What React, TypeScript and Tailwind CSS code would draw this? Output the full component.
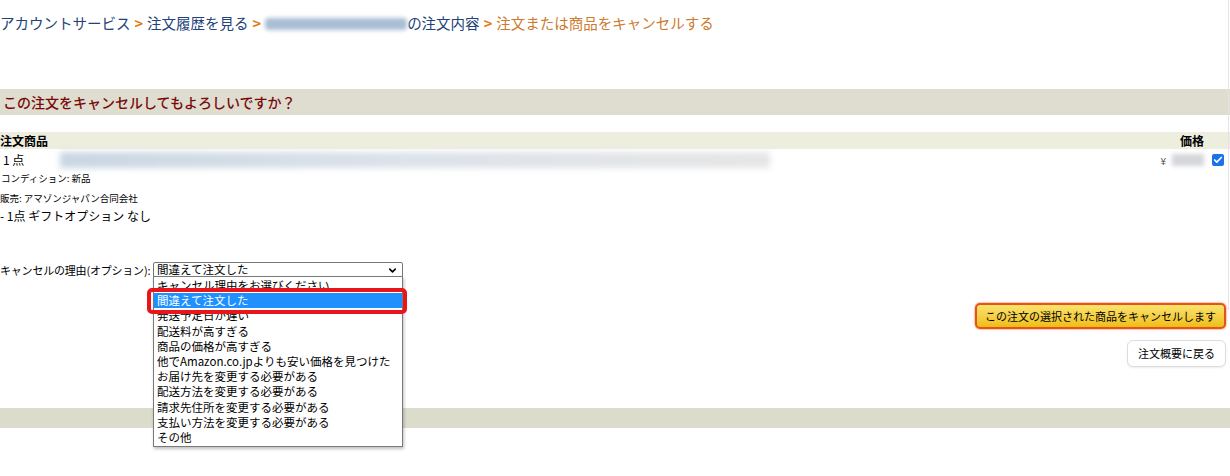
import React from "react";
import { ChevronDown, Check } from "lucide-react";

const reasons = [
  "キャンセル理由をお選びください",
  "間違えて注文した",
  "発送予定日が遅い",
  "配送料が高すぎる",
  "商品の価格が高すぎる",
  "他でAmazon.co.jpよりも安い価格を見つけた",
  "お届け先を変更する必要がある",
  "配送方法を変更する必要がある",
  "請求先住所を変更する必要がある",
  "支払い方法を変更する必要がある",
  "その他",
];

const font = "font-['Noto_Sans_CJK_JP','Liberation_Sans',sans-serif]";

function Crumb({ children }: { children: React.ReactNode }) {
  return <span className="text-[#23427a]">{children}</span>;
}

function Sep() {
  return <span className="text-[#e47911] font-bold mx-[4px]">&gt;</span>;
}

export default function App() {
  return (
    <div className={`relative w-[1230px] h-[476px] bg-white overflow-hidden text-black ${font}`}>
      {/* breadcrumb */}
      <div className="h-[89px] pt-[12px] text-[14.5px] leading-[22px] flex items-start">
        <Crumb>アカウントサービス</Crumb>
        <Sep />
        <Crumb>注文履歴を見る</Crumb>
        <Sep />
        <span className="inline-block w-[142px] h-[12px] mt-[6px] bg-[#a9bdd3] blur-[2px] rounded-sm" />
        <Crumb>の注文内容</Crumb>
        <Sep />
        <span className="text-[#cc7a2e]">注文または商品をキャンセルする</span>
      </div>

      {/* question band */}
      <div className="h-[26px] bg-[#deddd0] flex items-center pl-[3px] text-[#7a0a0a] text-[14px] font-medium">
        この注文をキャンセルしてもよろしいですか？
      </div>

      <div className="h-[17px]" />

      {/* table header */}
      <div className="h-[17px] bg-[#eeeedf] flex items-center justify-between text-[12px] font-bold pr-[26px]">
        <span>注文商品</span>
        <span>価格</span>
      </div>

      {/* item row */}
      <div className="h-[20px] flex items-center text-[12px] mt-[1px]">
        <span className="w-[60px] pl-[3px]">1 点</span>
        <div className="w-[710px] h-[16px] bg-gradient-to-r from-[#c9d6e2] via-[#dde3ea] to-[#e6e6e6] blur-[3px]" />
        <div className="flex-1" />
        <span className="text-[10px] text-[#555] mr-[6px]">¥</span>
        <div className="w-[32px] h-[12px] bg-[#d4d6da] blur-[2px] mr-[8px]" />
        <div className="w-[12px] h-[12px] rounded-[2px] bg-[#1a73e8] flex items-center justify-center mr-[6px]">
          <Check size={10} strokeWidth={4} className="text-white" />
        </div>
      </div>

      <div className="text-[9.5px] leading-[20px] mt-[-2px] pl-[1px]">コンディション: 新品</div>
      <div className="text-[9.5px] leading-[20px]">販売: アマゾンジャパン合同会社</div>
      <div className="text-[12px] leading-[16px]">- 1点 ギフトオプション なし</div>

      {/* reason + buttons */}
      <div className="flex justify-between mt-[37px]">
        <div className="flex items-center h-[18px]">
          <span className="w-[153px] text-[11px] whitespace-nowrap tracking-[-0.2px]">キャンセルの理由(オプション):</span>
          <div className="w-[250px] h-[17px] border border-[#767676] rounded-[2px] flex items-center justify-between pl-[3px] pr-[4px]">
            <span className="text-[11.5px] leading-none">間違えて注文した</span>
            <ChevronDown size={11} strokeWidth={3.5} />
          </div>
        </div>
        <div className="flex flex-col items-end pt-[42px] pr-[4px] gap-[11px]">
          <button className="h-[26px] px-[8px] rounded-[5px] border-2 border-[#e5531a] bg-gradient-to-b from-[#fbe46a] to-[#efbd0a] text-[11px] shadow-[0_0_2px_#e0401a]">
            この注文の選択された商品をキャンセルします
          </button>
          <button className="h-[27px] px-[10px] rounded-[6px] border border-[#dddddd] bg-white text-[11px] shadow-[0_1px_2px_rgba(0,0,0,0.08)]">
            注文概要に戻る
          </button>
        </div>
      </div>

      {/* bottom band */}
      <div className="absolute left-0 right-0 top-[408px] h-[20px] bg-[#dcdccd]" />

      {/* open dropdown list */}
      <div className="absolute left-[153px] top-[276px] w-[250px] bg-white border border-[#7a7a7a] shadow-[1px_2px_3px_rgba(0,0,0,0.25)] py-[1px]">
        {reasons.map((r, i) => (
          <div
            key={r}
            className={`h-[15.2px] leading-[15px] pl-[3px] text-[11.5px] whitespace-nowrap ${
              i === 1 ? "bg-[#1e90ff] text-white" : ""
            }`}
          >
            {r}
          </div>
        ))}
      </div>

      {/* red highlight */}
      <div className="absolute left-[147px] top-[288px] w-[260px] h-[26px] rounded-[5px] border-[4px] border-[#e8151a]" />

      {/* right edge line */}
      <div className="absolute right-[1px] top-0 h-[310px] w-px bg-[#e4e4e4]" />
    </div>
  );
}
